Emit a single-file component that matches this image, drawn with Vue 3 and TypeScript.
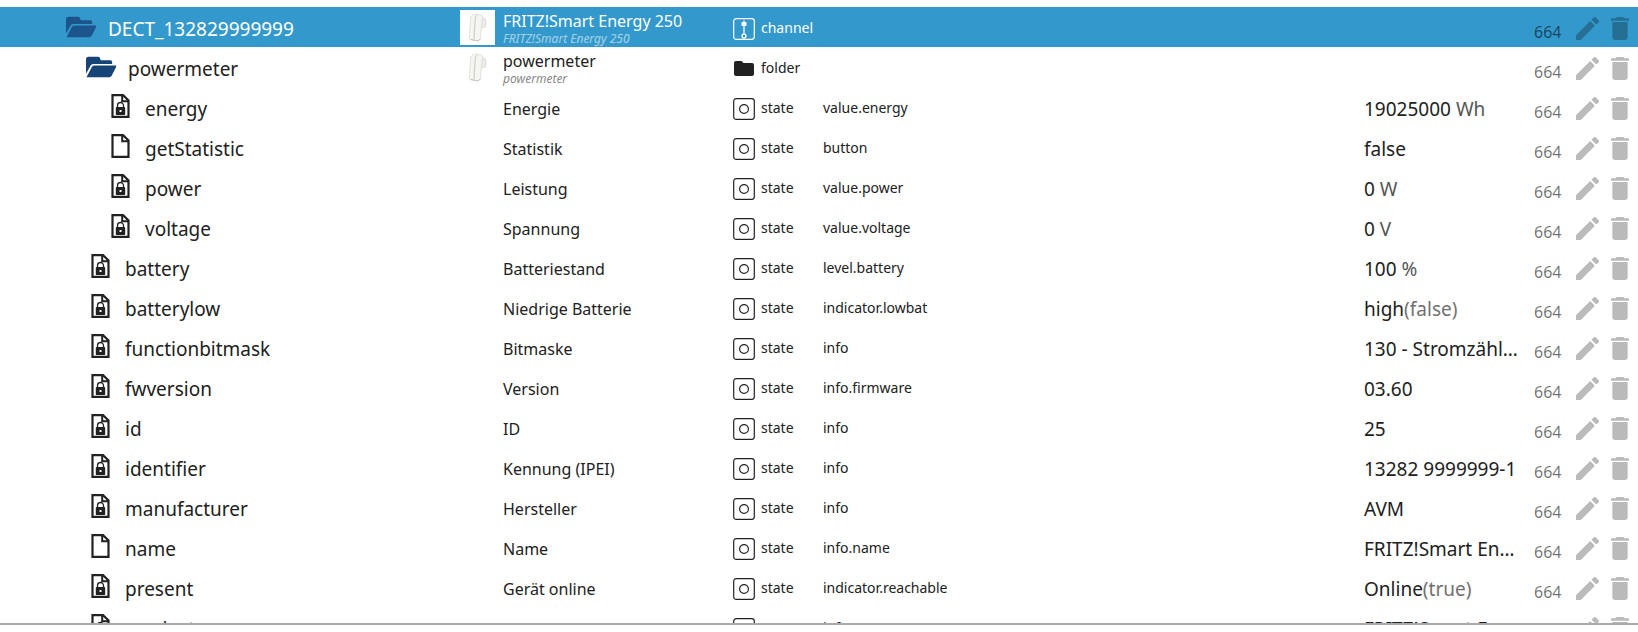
<script setup lang="ts">
type Kind = 'channel' | 'folder' | 'state'

interface Item {
  id: string
  depth: number
  kind: Kind
  locked?: boolean
  name: string
  sub?: string
  role?: string
  value?: string
  note?: string
}

const items: Item[] = [
  { id: 'DECT_132829999999', depth: 0, kind: 'channel', name: 'FRITZ!Smart Energy 250', sub: 'FRITZ!Smart Energy 250' },
  { id: 'powermeter', depth: 1, kind: 'folder', name: 'powermeter', sub: 'powermeter' },
  { id: 'energy', depth: 2, kind: 'state', locked: true, name: 'Energie', role: 'value.energy', value: '19025000', note: ' Wh' },
  { id: 'getStatistic', depth: 2, kind: 'state', name: 'Statistik', role: 'button', value: 'false' },
  { id: 'power', depth: 2, kind: 'state', locked: true, name: 'Leistung', role: 'value.power', value: '0', note: ' W' },
  { id: 'voltage', depth: 2, kind: 'state', locked: true, name: 'Spannung', role: 'value.voltage', value: '0', note: ' V' },
  { id: 'battery', depth: 1, kind: 'state', locked: true, name: 'Batteriestand', role: 'level.battery', value: '100', note: ' %' },
  { id: 'batterylow', depth: 1, kind: 'state', locked: true, name: 'Niedrige Batterie', role: 'indicator.lowbat', value: 'high', note: '(false)' },
  { id: 'functionbitmask', depth: 1, kind: 'state', locked: true, name: 'Bitmaske', role: 'info', value: '130 - Stromzähler' },
  { id: 'fwversion', depth: 1, kind: 'state', locked: true, name: 'Version', role: 'info.firmware', value: '03.60' },
  { id: 'id', depth: 1, kind: 'state', locked: true, name: 'ID', role: 'info', value: '25' },
  { id: 'identifier', depth: 1, kind: 'state', locked: true, name: 'Kennung (IPEI)', role: 'info', value: '13282 9999999-1' },
  { id: 'manufacturer', depth: 1, kind: 'state', locked: true, name: 'Hersteller', role: 'info', value: 'AVM' },
  { id: 'name', depth: 1, kind: 'state', name: 'Name', role: 'info.name', value: 'FRITZ!Smart Energy 250' },
  { id: 'present', depth: 1, kind: 'state', locked: true, name: 'Gerät online', role: 'indicator.reachable', value: 'Online', note: '(true)' },
  { id: 'productname', depth: 1, kind: 'state', locked: true, name: 'Produktname', role: 'info', value: 'FRITZ!Smart Energy 250' },
]
</script>

<template>
  <main class="browser">
    <table class="tree">
      <colgroup>
        <col class="c-id" />
        <col class="c-name" />
        <col class="c-type" />
        <col />
        <col class="c-value" />
        <col class="c-perm" />
        <col class="c-actions" />
      </colgroup>
      <tbody>
        <tr v-for="item in items" :key="item.id" :class="{ selected: item.kind === 'channel' }">
          <td>
            <div class="id-cell" :class="'depth-' + item.depth">
              <svg v-if="item.kind !== 'state'" class="folder-icon" viewBox="0 0 32 22" aria-hidden="true">
                <path d="M0 18V3Q0 .5 2.500 .5H12Q14 .5 14.500 2L15.200 4H25Q27 4 27 6V8H7.500Q5.500 8 4.500 10Z" />
                <path d="M.5 21.500L6 11Q7 9.500 8.500 9.500H30.500Q31.800 9.500 31 11L26.500 20Q25.700 21.500 24 21.500Z" />
              </svg>
              <span v-else class="file-box">
                <svg class="file-icon" viewBox="0 0 19 24" aria-hidden="true">
                  <path d="M1.500 1.200H12L17.500 6.500V22.800H1.500Z" fill="none" stroke="currentColor" stroke-width="2.200" />
                  <path d="M11.200 1V7.200H18" fill="none" stroke="currentColor" stroke-width="2" />
                  <template v-if="item.locked">
                    <path d="M6.500 13V11.500A3 3 0 0 1 12.500 11.500V13" fill="none" stroke="currentColor" stroke-width="1.300" />
                    <path fill-rule="evenodd" d="M5.500 13H13.500Q14.200 13 14.200 14V20Q14.200 21 13.500 21H5.500Q4.800 21 4.800 20V14Q4.800 13 5.500 13ZM8.500 16V18H10.500V16Z" />
                  </template>
                </svg>
              </span>
              <span class="id-text">{{ item.id }}</span>
            </div>
          </td>
          <td>
            <div class="name-cell">
              <span class="thumb">
                <svg v-if="item.sub" viewBox="0 0 35 35" role="img" aria-label="Smart Energy 250">
                  <rect width="35" height="35" fill="#fff" />
                  <path d="M21 7L25 8.500Q27 12 25.500 16.500L21 18Z" fill="#ecece8" stroke="#d4d4ce" stroke-width=".8" />
                  <path d="M12 5.500Q14 3.800 17 4L21 5Q22.500 5.500 22.400 7L20.500 28Q20.300 30.500 18 31L10.500 29.500Q9 29 9.200 27L10.800 8Q11 6.200 12 5.500Z" fill="#f5f5f2" stroke="#dcdcd6" stroke-width=".8" />
                  <path d="M17 5Q15.500 6 15.300 8L14 29.500M10 29.500L18 31L20.500 28.500" fill="none" stroke="#c2c2bc" stroke-width=".9" />
                </svg>
              </span>
              <span class="names">
                <span class="title">{{ item.name }}</span>
                <span v-if="item.sub" class="sub">{{ item.sub }}</span>
              </span>
            </div>
          </td>
          <td>
            <div class="type-cell">
              <svg v-if="item.kind === 'channel'" viewBox="0 0 22 22" aria-hidden="true">
                <rect x=".7" y=".7" width="20.600" height="20.600" rx="2.500" fill="none" stroke="currentColor" stroke-width="1.200" />
                <path d="M11 2.500V15" fill="none" stroke="currentColor" stroke-width="1.300" />
                <rect x="8.500" y="4" width="5" height="4" rx="1" />
                <circle cx="11" cy="18" r="2" fill="none" stroke="currentColor" stroke-width="1.300" />
              </svg>
              <svg v-else-if="item.kind === 'folder'" viewBox="0 0 22 22" aria-hidden="true">
                <path d="M1 5Q1 3 3 3H8.500L10.500 5H19Q21 5 21 7V16Q21 18 19 18H3Q1 18 1 16Z" />
              </svg>
              <svg v-else viewBox="0 0 22 22" aria-hidden="true">
                <rect x=".7" y=".7" width="20.600" height="20.600" rx="2.500" fill="none" stroke="currentColor" stroke-width="1.200" />
                <circle cx="11" cy="11" r="4.400" fill="none" stroke="currentColor" stroke-width="1.200" />
              </svg>
              <span>{{ item.kind }}</span>
            </div>
          </td>
          <td class="role">{{ item.role }}</td>
          <td class="value">{{ item.value }}<span v-if="item.note" :class="item.note.startsWith('(') ? 'raw' : 'unit'">{{ item.note }}</span></td>
          <td class="perm">664</td>
          <td>
            <div class="actions">
              <button type="button" :aria-label="'Edit ' + item.id">
                <svg viewBox="3 3 18 18" class="pencil" aria-hidden="true">
                  <path d="M3 17.250V21h3.750L17.810 9.940l-3.750-3.750L3 17.250zM20.710 7.040c.39-.39.39-1.020 0-1.410l-2.340-2.340c-.39-.39-1.020-.39-1.410 0l-1.830 1.830 3.750 3.750 1.830-1.830z" />
                </svg>
              </button>
              <button type="button" :aria-label="'Delete ' + item.id">
                <svg viewBox="5 3 14 18" class="trash" aria-hidden="true">
                  <path d="M6 19c0 1.100.9 2 2 2h8c1.100 0 2-.9 2-2V7H6v12zM19 4h-3.500l-1-1h-5l-1 1H5v2h14V4z" />
                </svg>
              </button>
            </div>
          </td>
        </tr>
      </tbody>
    </table>
  </main>
</template>

<style>
body {
  background: #fff;
}
</style>

<style scoped>
.browser {
  box-sizing: border-box;
  height: calc(100vh - 7px);
  max-height: 618px;
  margin-top: 7px;
  overflow: hidden;
  border-bottom: 2px solid #a9a9a9;
  box-shadow: 0 1px 4px rgba(0, 0, 0, 0.4);
  clip-path: inset(0 0 -8px 0);
  color: #212121;
  font-family: "Noto Sans", "Open Sans", sans-serif;
}
.tree {
  width: 100%;
  table-layout: fixed;
  border-collapse: collapse;
}
.c-id { width: 460px; }
.c-name { width: 273px; }
.c-type { width: 90px; }
.c-value { width: 162px; }
.c-perm { width: 50px; }
.c-actions { width: 62px; }
td {
  box-sizing: border-box;
  height: 40px;
  padding: 0;
  line-height: 20px;
  white-space: nowrap;
  vertical-align: middle;
}
svg { fill: currentColor; display: block; flex: none; }
.selected {
  background: #3399cc;
  color: #fff;
}
.id-cell,
.name-cell,
.type-cell,
.actions {
  box-sizing: border-box;
  display: flex;
  align-items: center;
  height: 40px;
}
.id-cell {
  gap: 11px;
  font-size: 19px;
}
.id-text { padding-top: 4px; }
.depth-0 { padding-left: 66px; }
.depth-1 { padding-left: 86px; }
.depth-2 { padding-left: 106px; }
.folder-icon {
  width: 31px;
  height: 22px;
  color: #164477;
}
.selected .folder-icon { color: #1c558b; }
.file-box {
  display: flex;
  justify-content: center;
  width: 28px;
  padding-bottom: 2px;
}
.file-icon { width: 19px; height: 24px; }
.name-cell { gap: 8px; }
.thumb { width: 35px; height: 35px; flex: none; }
.names { display: flex; flex-direction: column; padding-top: 3px; }
.title { font-size: 16px; line-height: 20px; }
.sub {
  font-size: 12px;
  line-height: 16px;
  font-style: italic;
  opacity: 0.55;
}
.type-cell {
  gap: 6px;
  padding-top: 4px;
  font-size: 14px;
}
.type-cell svg { width: 22px; height: 22px; }
.type-cell span { padding-bottom: 2px; }
td.role { padding-top: 2px; font-size: 14px; }
td.value {
  padding: 4px 6px 0 0;
  font-size: 19px;
  overflow: hidden;
  text-overflow: ellipsis;
}
.unit { color: #555; }
.raw { color: #707070; }
td.perm {
  padding: 9px 0 0 8px;
  font-size: 16px;
  color: rgba(0, 0, 0, 0.56);
}
.actions {
  gap: 12px;
  padding-top: 2px;
}
button {
  border: 0;
  padding: 0;
  background: none;
  color: rgba(0, 0, 0, 0.27);
  cursor: pointer;
}
.pencil { width: 23px; height: 23px; }
.trash { width: 18px; height: 23px; }
</style>
